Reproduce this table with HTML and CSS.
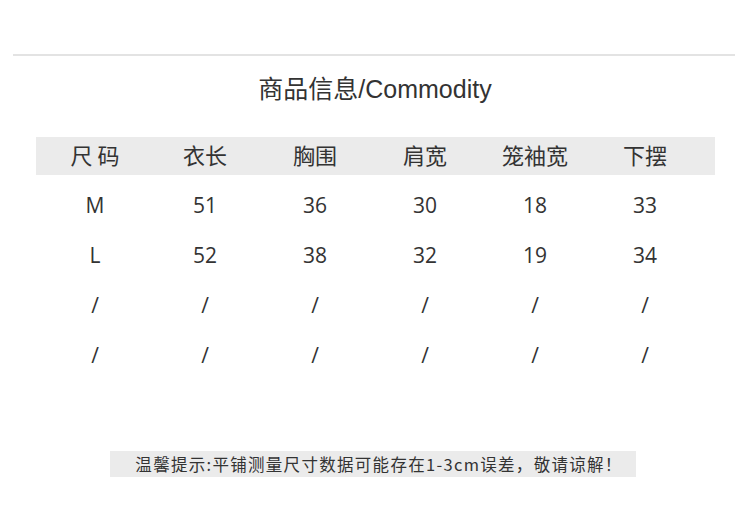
FILE: index.html
```html
<!DOCTYPE html>
<html lang="zh">
<head>
<meta charset="utf-8">
<link rel="stylesheet" href="styles.css">
</head>
<body>
<div class="page">
  <div class="rule"></div>
  <h1 class="title">商品信息/Commodity</h1>
  <div class="table">
    <div class="row head">
      <div class="cell">尺 码</div><div class="cell">衣长</div><div class="cell">胸围</div><div class="cell">肩宽</div><div class="cell">笼袖宽</div><div class="cell">下摆</div>
    </div>
    <div class="row">
      <div class="cell">M</div><div class="cell">51</div><div class="cell">36</div><div class="cell">30</div><div class="cell">18</div><div class="cell">33</div>
    </div>
    <div class="row">
      <div class="cell">L</div><div class="cell">52</div><div class="cell">38</div><div class="cell">32</div><div class="cell">19</div><div class="cell">34</div>
    </div>
    <div class="row">
      <div class="cell">/</div><div class="cell">/</div><div class="cell">/</div><div class="cell">/</div><div class="cell">/</div><div class="cell">/</div>
    </div>
    <div class="row">
      <div class="cell">/</div><div class="cell">/</div><div class="cell">/</div><div class="cell">/</div><div class="cell">/</div><div class="cell">/</div>
    </div>
  </div>
  <div class="note">温馨提示:平铺测量尺寸数据可能存在1-3cm误差，敬请谅解！</div>
</div>
</body>
</html>
```
FILE: styles.css
```css
html, body {
  margin: 0;
  padding: 0;
  background: #ffffff;
}
body {
  width: 750px;
  height: 531px;
  overflow: hidden;
  font-family: "Open Sans", "Noto Sans CJK SC", sans-serif;
  color: #333333;
}
.page {
  padding-top: 54px;
  display: flex;
  flex-direction: column;
}
.rule {
  margin: 0 15px 0 13px;
  height: 2px;
  background: #e3e3e3;
}
.title {
  margin: 18px 0 0 0;
  height: 30px;
  line-height: 30px;
  text-align: center;
  font-family: "Liberation Sans", "Noto Sans CJK SC", sans-serif;
  font-size: 25px;
  font-weight: 400;
  color: #333333;
}
.table {
  margin: 33px 35px 0 36px;
  display: flex;
  flex-direction: column;
}
.row {
  display: grid;
  grid-template-columns: repeat(6, 110px);
  padding-left: 4px;
  height: 50px;
  align-items: center;
  font-size: 21px;
  color: #333333;
}
.row.head {
  box-sizing: border-box;
  height: 38px;
  padding-bottom: 5px;
  background: #ebebeb;
  margin-bottom: 5px;
  font-family: "Noto Sans CJK SC", sans-serif;
  font-size: 22px;
}
.cell {
  text-align: center;
  line-height: 1;
}
.note {
  box-sizing: border-box;
  align-self: flex-start;
  margin: 71px 0 0 110px;
  width: 526px;
  height: 26px;
  padding-left: 12px;
  line-height: 26px;
  background: #ebebeb;
  text-align: center;
  font-family: "Noto Sans CJK SC", sans-serif;
  font-size: 16.5px;
  letter-spacing: 1.3px;
  color: #333333;
}
```
